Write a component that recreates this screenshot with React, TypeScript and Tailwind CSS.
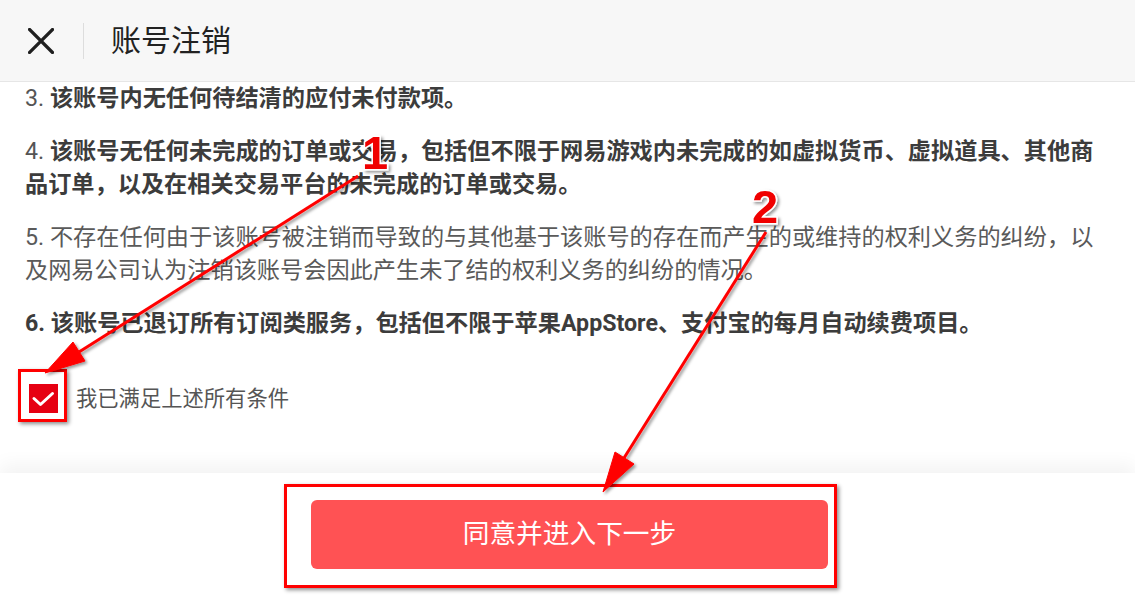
import React from "react";

const Annotations = () => {
  return (
    <>
      <div className="pointer-events-none absolute left-[18px] top-[369px] h-[53px] w-[49px] border-[3px] border-[#ff0000] shadow-[2px_2px_4px_rgba(0,0,0,0.45)]" />
      <div className="pointer-events-none absolute left-[284px] top-[484px] h-[104px] w-[553px] border-[3px] border-[#ff0000] shadow-[2px_2px_4px_rgba(0,0,0,0.45)]" />

      <svg
        className="pointer-events-none absolute left-0 top-0"
        width={1135}
        height={595}
        viewBox="0 0 1135 595"
      >
        <defs>
          <filter id="shade" x="-20%" y="-20%" width="140%" height="140%">
            <feDropShadow dx="2" dy="2" stdDeviation="1.5" floodColor="#000" floodOpacity="0.4" />
          </filter>
        </defs>
        <g filter="url(#shade)" fill="#ff0000" stroke="#ff0000">
          {/* arrow 1 -> checkbox */}
          <line x1={358} y1={176} x2={79} y2={352} strokeWidth={3} />
          <polygon points="45,373 85,361 73,342" strokeWidth={1} strokeLinejoin="round" />
          {/* arrow 2 -> button */}
          <line x1={766} y1={232} x2={624} y2={458} strokeWidth={3} />
          <polygon points="603,492 634,464 615,452" strokeWidth={1} strokeLinejoin="round" />
        </g>
        <g
          filter="url(#shade)"
          fontFamily="'Liberation Sans', Arial, sans-serif"
          fontWeight="bold"
          fontSize={47}
          textAnchor="middle"
          fill="#f00000"
          stroke="#ffffff"
          strokeWidth={3}
          style={{ paintOrder: "stroke" }}
        >
          <text x={375} y={169}>1</text>
          <text x={765} y={223}>2</text>
        </g>
      </svg>
    </>
  );
};

const App = () => {
  return (
    <div className="relative flex h-[595px] w-full flex-col overflow-hidden bg-white font-[Roboto,'Noto_Sans_CJK_SC',sans-serif]">
      {/* header */}
      <div className="flex h-[82px] shrink-0 items-center border-b border-[#e6e6e6] bg-[#f7f7f7]">
        <svg className="ml-[28px]" width={26} height={26} viewBox="0 0 26 26">
          <path d="M1.5 1.5 L24.5 24.5 M24.5 1.5 L1.5 24.5" stroke="#1f1f1f" strokeWidth={3.2} strokeLinecap="square" />
        </svg>
        <div className="ml-[29px] h-[36px] w-px bg-[#dddddd]" />
        <h1 className="ml-[27px] text-[30px] font-normal text-[#222222]">账号注销</h1>
      </div>

      {/* conditions */}
      <div className="flex flex-1 flex-col pl-[25px] pr-[26px]">
        <div className="flex flex-col gap-[20px] text-[23.2px] leading-[33px]">
          <p className="text-[#3c3c3c]">
            <span className="font-normal text-[#555555]">3. </span>
            <span className="font-bold">该账号内无任何待结清的应付未付款项。</span>
          </p>
          <p className="text-[#3c3c3c]">
            <span className="font-normal text-[#555555]">4. </span>
            <span className="font-bold">
              该账号无任何未完成的订单或交易，包括但不限于网易游戏内未完成的如虚拟货币、虚拟道具、其他商品订单，以及在相关交易平台的未完成的订单或交易。
            </span>
          </p>
          <p className="text-[#5a5a5a]">
            5. 不存在任何由于该账号被注销而导致的与其他基于该账号的存在而产生的或维持的权利义务的纠纷，以及网易公司认为注销该账号会因此产生未了结的权利义务的纠纷的情况。
          </p>
          <p className="font-bold text-[#3c3c3c]">
            6. 该账号已退订所有订阅类服务，包括但不限于苹果AppStore、支付宝的每月自动续费项目。
          </p>
        </div>

        <label className="mt-[43px] flex items-center">
          <span className="ml-[4px] flex h-[29px] w-[29px] items-center justify-center bg-[#e60012]">
            <svg width={29} height={29} viewBox="0 0 29 29">
              <path d="M5 14.5 L11.5 20.5 L23.5 9.5" fill="none" stroke="#ffffff" strokeWidth={3} strokeLinecap="round" strokeLinejoin="round" />
            </svg>
          </span>
          <span className="ml-[18px] text-[21.3px] text-[#555555]">我已满足上述所有条件</span>
        </label>
      </div>

      {/* footer */}
      <div className="relative flex h-[122px] shrink-0 justify-center bg-white shadow-[0_-8px_18px_rgba(0,0,0,0.05)]">
        <button className="ml-[4px] mt-[27px] flex h-[69px] w-[517px] items-center justify-center rounded-[6px] bg-[#ff5254] text-[26.7px] text-white">
          同意并进入下一步
        </button>
      </div>

      <Annotations />
    </div>
  );
};

export default App;
